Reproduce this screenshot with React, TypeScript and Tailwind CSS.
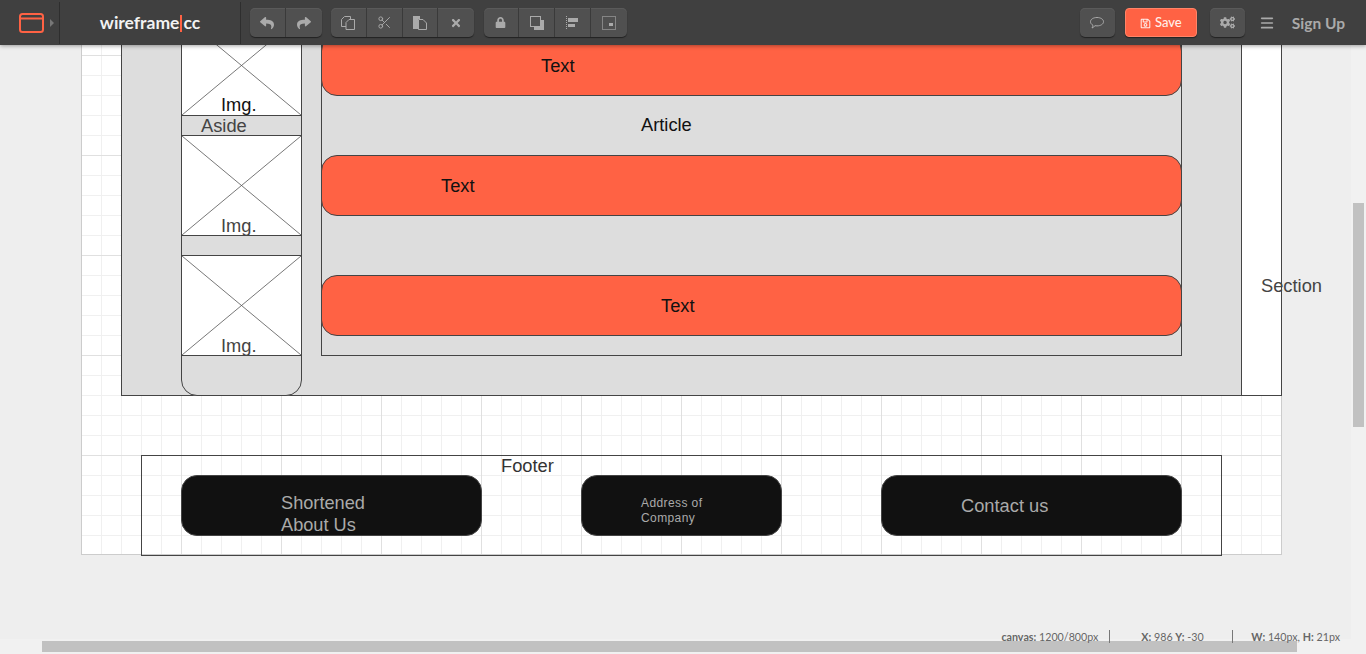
import { Scissors, Menu } from "lucide-react";
import { FaCogs, FaLock, FaRegSave, FaReply, FaShare, FaTimes } from "react-icons/fa";
import type { ReactNode } from "react";

const sans = "font-['Liberation_Sans',Arial,sans-serif]";

function ToolGroup({ children }: { children: ReactNode }) {
  return (
    <div className="flex h-[29px] rounded-[5px] bg-[#505050] shadow-[0_1px_1px_#222,inset_0_1px_0_#5a5a5a]">
      {children}
    </div>
  );
}

function ToolButton({ children, last }: { children: ReactNode; last?: boolean }) {
  return (
    <div
      className={`flex h-full w-[35.75px] items-center justify-center text-[#aaaaaa] ${
        last ? "" : "border-r border-[#3a3a3a]"
      }`}
    >
      {children}
    </div>
  );
}

function ImgBox({ top, labelTop, labelColor }: { top: string; labelTop: string; labelColor: string }) {
  return (
    <div className={`absolute left-[99px] h-[101px] w-[121px] border border-[#444] bg-white ${top}`}>
      <svg className="absolute inset-0 h-full w-full" viewBox="0 0 119 99" preserveAspectRatio="none">
        <path d="M0 0L119 99M119 0L0 99" stroke="#555" strokeWidth="0.8" fill="none" />
      </svg>
      <span className={`absolute left-[39px] text-[18.3px] leading-5 ${sans} ${labelTop} ${labelColor}`}>Img.</span>
    </div>
  );
}

function RedBox({ top, left }: { top: string; left: string }) {
  return (
    <div className={`absolute left-[239px] h-[61px] w-[861px] rounded-2xl border border-[#444] bg-[#ff6244] ${top}`}>
      <span className={`absolute top-5 text-[18.3px] leading-5 text-[#111] ${sans} ${left}`}>Text</span>
    </div>
  );
}

export default function App() {
  return (
    <div className="relative flex h-[654px] w-[1366px] flex-col overflow-hidden bg-[#eeeeee] font-['Lato',sans-serif]">
      <header className="z-10 flex h-[45px] shrink-0 items-center bg-[#404040] shadow-[0_1px_4px_rgba(0,0,0,0.35)]">
        <div className="flex h-[42px] w-[60px] items-center border-r border-[#2e2e2e] pl-[19px]">
          <svg width="25" height="20" viewBox="0 0 25 20" fill="none" stroke="#ff6244" strokeWidth="2">
            <rect x="1" y="1" width="23" height="18" rx="2.5" />
            <path d="M1 5.5H24" />
          </svg>
          <span className="ml-[6px] h-0 w-0 border-y-4 border-l-4 border-y-transparent border-l-[#777]" />
        </div>
        <div className="flex h-[42px] w-[181px] items-center justify-center border-r border-[#2e2e2e] pt-[2px] text-[17.5px] font-bold text-[#f2f2f2]">
          wireframe<span className="mx-[1px] h-[17px] w-[2px] bg-[#ff6244]" />cc
        </div>
        <div className="ml-[9px] flex gap-[9.5px]">
          <ToolGroup>
            <ToolButton><FaReply size={14} /></ToolButton>
            <ToolButton last><FaShare size={14} /></ToolButton>
          </ToolGroup>
          <ToolGroup>
            <ToolButton>
              <svg width="14" height="14" viewBox="0 0 14 14" fill="none" stroke="#aaa">
                <path d="M9.5 3.5V0.5H3.5L0.5 3.5V10.5H5" />
                <path d="M8 3.5H13.5V13.5H5V6.5L8 3.5Z" />
              </svg>
            </ToolButton>
            <ToolButton><Scissors size={15} strokeWidth={1.5} /></ToolButton>
            <ToolButton>
              <svg width="14" height="14" viewBox="0 0 14 14">
                <path d="M0 0H7V3H5V13H0Z" fill="#aaa" />
                <path d="M5.5 3.5H10L13.5 7V13.5H5.5Z" fill="none" stroke="#aaa" />
              </svg>
            </ToolButton>
            <ToolButton last><FaTimes size={12} /></ToolButton>
          </ToolGroup>
          <ToolGroup>
            <ToolButton><FaLock size={11} /></ToolButton>
            <ToolButton>
              <svg width="14" height="14" viewBox="0 0 14 14">
                <rect x="0.5" y="0.5" width="10" height="10" fill="none" stroke="#aaa" />
                <path d="M4 11H11V4H14V14H4Z" fill="#aaa" />
              </svg>
            </ToolButton>
            <ToolButton>
              <svg width="12" height="14" viewBox="0 0 12 14">
                <path d="M0.5 0V14" stroke="#aaa" strokeDasharray="1 1" />
                <path d="M2 2H12V6H2ZM2 8H9V11H2Z" fill="#aaa" />
              </svg>
            </ToolButton>
            <ToolButton last>
              <svg width="14" height="14" viewBox="0 0 14 14">
                <rect x="0.5" y="0.5" width="13" height="13" fill="none" stroke="#bbb" strokeDasharray="1 1" />
                <path d="M7 7H11V10H7Z" fill="#aaa" />
              </svg>
            </ToolButton>
          </ToolGroup>
        </div>
        <div className="ml-auto flex items-center">
          <div className="flex h-[29px] w-[35px] items-center justify-center rounded-[5px] bg-[#505050] shadow-[0_1px_1px_#222,inset_0_1px_0_#5a5a5a]">
            <svg width="14" height="12" viewBox="0 0 14 12" fill="none" stroke="#aaa">
              <path d="M7 0.5C10.6 0.5 13.5 2.3 13.5 4.7C13.5 7.1 10.6 8.9 7 8.9C6.2 8.9 5.5 8.8 4.8 8.7C4.2 9.8 3.2 10.7 2 11C2.6 10.2 2.9 9.2 2.9 8.2C1.4 7.4 0.5 6.2 0.5 4.7C0.5 2.3 3.4 0.5 7 0.5Z" />
            </svg>
          </div>
          <div className="ml-[10px] flex h-[29px] w-[72px] items-center justify-center gap-[4px] rounded-[4px] border border-[#ff8468] bg-[#ff6244] pt-px text-[13px] font-medium text-[#ffeeea] shadow-[0_1px_1px_#222]">
            <FaRegSave size={11} />
            Save
          </div>
          <div className="ml-[13px] flex h-[29px] w-[35px] items-center justify-center rounded-[5px] bg-[#505050] text-[#aaaaaa] shadow-[0_1px_1px_#222,inset_0_1px_0_#5a5a5a]">
            <FaCogs size={15} />
          </div>
          <Menu size={16} className="ml-[14px] text-[#aaaaaa]" strokeWidth={2.5} />
          <span className="ml-[17px] mr-[21px] pt-[2px] text-[15.5px] font-bold text-[#aaaaaa]">Sign Up</span>
        </div>
      </header>

      <main className="relative flex-1 overflow-hidden">
        {/* canvas, 1200x800, scrolled so only the lower part shows */}
        <div className="relative ml-[81px] mt-[-290px] h-[800px] w-[1201px] border-x border-b border-[#cccccc] bg-white bg-[linear-gradient(#e0e0e0_1px,transparent_1px),linear-gradient(90deg,#e0e0e0_1px,transparent_1px),linear-gradient(#f0f0f0_1px,transparent_1px),linear-gradient(90deg,#f0f0f0_1px,transparent_1px)] bg-[size:100px_100px,100px_100px,20px_20px,20px_20px] bg-[position:-1px_0]">
          <div className="absolute left-[39px] top-[170px] h-[471px] w-[1161px] border border-[#444] bg-white" />
          <div className="absolute left-[40px] top-[171px] h-[470px] w-[1120px] border-b border-r border-[#444] bg-[#dddddd]" />
          <span className={`absolute left-[1179px] top-[521px] text-[18.3px] leading-5 text-[#444] ${sans}`}>Section</span>

          <div className="absolute left-[99px] top-[220px] h-[421px] w-[121px] rounded-b-2xl border border-[#444] bg-[#dddddd]" />
          <span className={`absolute left-[119px] top-[361px] text-[18.3px] leading-5 text-[#444] ${sans}`}>Aside</span>
          <ImgBox top="top-[260px]" labelTop="top-[79px]" labelColor="text-[#111]" />
          <ImgBox top="top-[380px]" labelTop="top-[80px]" labelColor="text-[#444]" />
          <ImgBox top="top-[500px]" labelTop="top-[80px]" labelColor="text-[#444]" />

          <div className="absolute left-[239px] top-[220px] h-[381px] w-[861px] border border-[#444] bg-[#dddddd]" />
          <span className={`absolute left-[559px] top-[360px] text-[18.3px] leading-5 text-[#111] ${sans}`}>Article</span>
          <RedBox top="top-[280px]" left="left-[219px]" />
          <RedBox top="top-[400px]" left="left-[119px]" />
          <RedBox top="top-[520px]" left="left-[339px]" />

          <div className="absolute left-[59px] top-[700px] h-[101px] w-[1081px] border border-[#444]">
            <span className={`absolute left-[359px] top-0 text-[18.3px] leading-5 text-[#333] ${sans}`}>Footer</span>
          </div>
          <div className={`absolute left-[99px] top-[720px] h-[61px] w-[301px] rounded-2xl border border-[#444] bg-[#111111] pl-[99px] pt-[16px] text-[18.2px] leading-[22px] text-[#aaaaaa] ${sans}`}>
            Shortened
            <br />
            About Us
          </div>
          <div className={`absolute left-[499px] top-[720px] h-[61px] w-[201px] rounded-2xl border border-[#444] bg-[#111111] pl-[59px] pt-5 text-[12px] leading-[15px] tracking-[0.4px] text-[#aaaaaa] ${sans}`}>
            Address of
            <br />
            Company
          </div>
          <div className={`absolute left-[799px] top-[720px] h-[61px] w-[301px] rounded-2xl border border-[#444] bg-[#111111] pl-[79px] pt-5 text-[18.3px] leading-5 text-[#aaaaaa] ${sans}`}>
            Contact us
          </div>
        </div>
      </main>

      {/* status line sits over the bottom scrollbar */}
      <div className="absolute bottom-[11px] right-[26px] z-10 flex text-[10.7px] leading-[13px] text-[#666]">
        <span className="border-r border-[#777] pr-[11px]"><b>canvas:</b> 1200/800px</span>
        <span className="w-[123px] border-r border-[#777] pl-[31px]"><b>X:</b> 986 <b>Y:</b> -30</span>
        <span className="pl-[18px]"><b>W:</b> 140px, <b>H:</b> 21px</span>
      </div>

      <div className="absolute bottom-0 right-0 top-[45px] w-[15px] bg-[#f1f1f1]">
        <div className="absolute left-[2px] top-[158px] h-[224px] w-[11px] bg-[#c1c1c1]" />
      </div>
      <div className="absolute bottom-0 left-0 h-[15px] w-[1351px] bg-[#f1f1f1]">
        <div className="absolute left-[42px] top-[2px] h-[11px] w-[1255px] bg-[#c1c1c1]" />
      </div>
    </div>
  );
}
